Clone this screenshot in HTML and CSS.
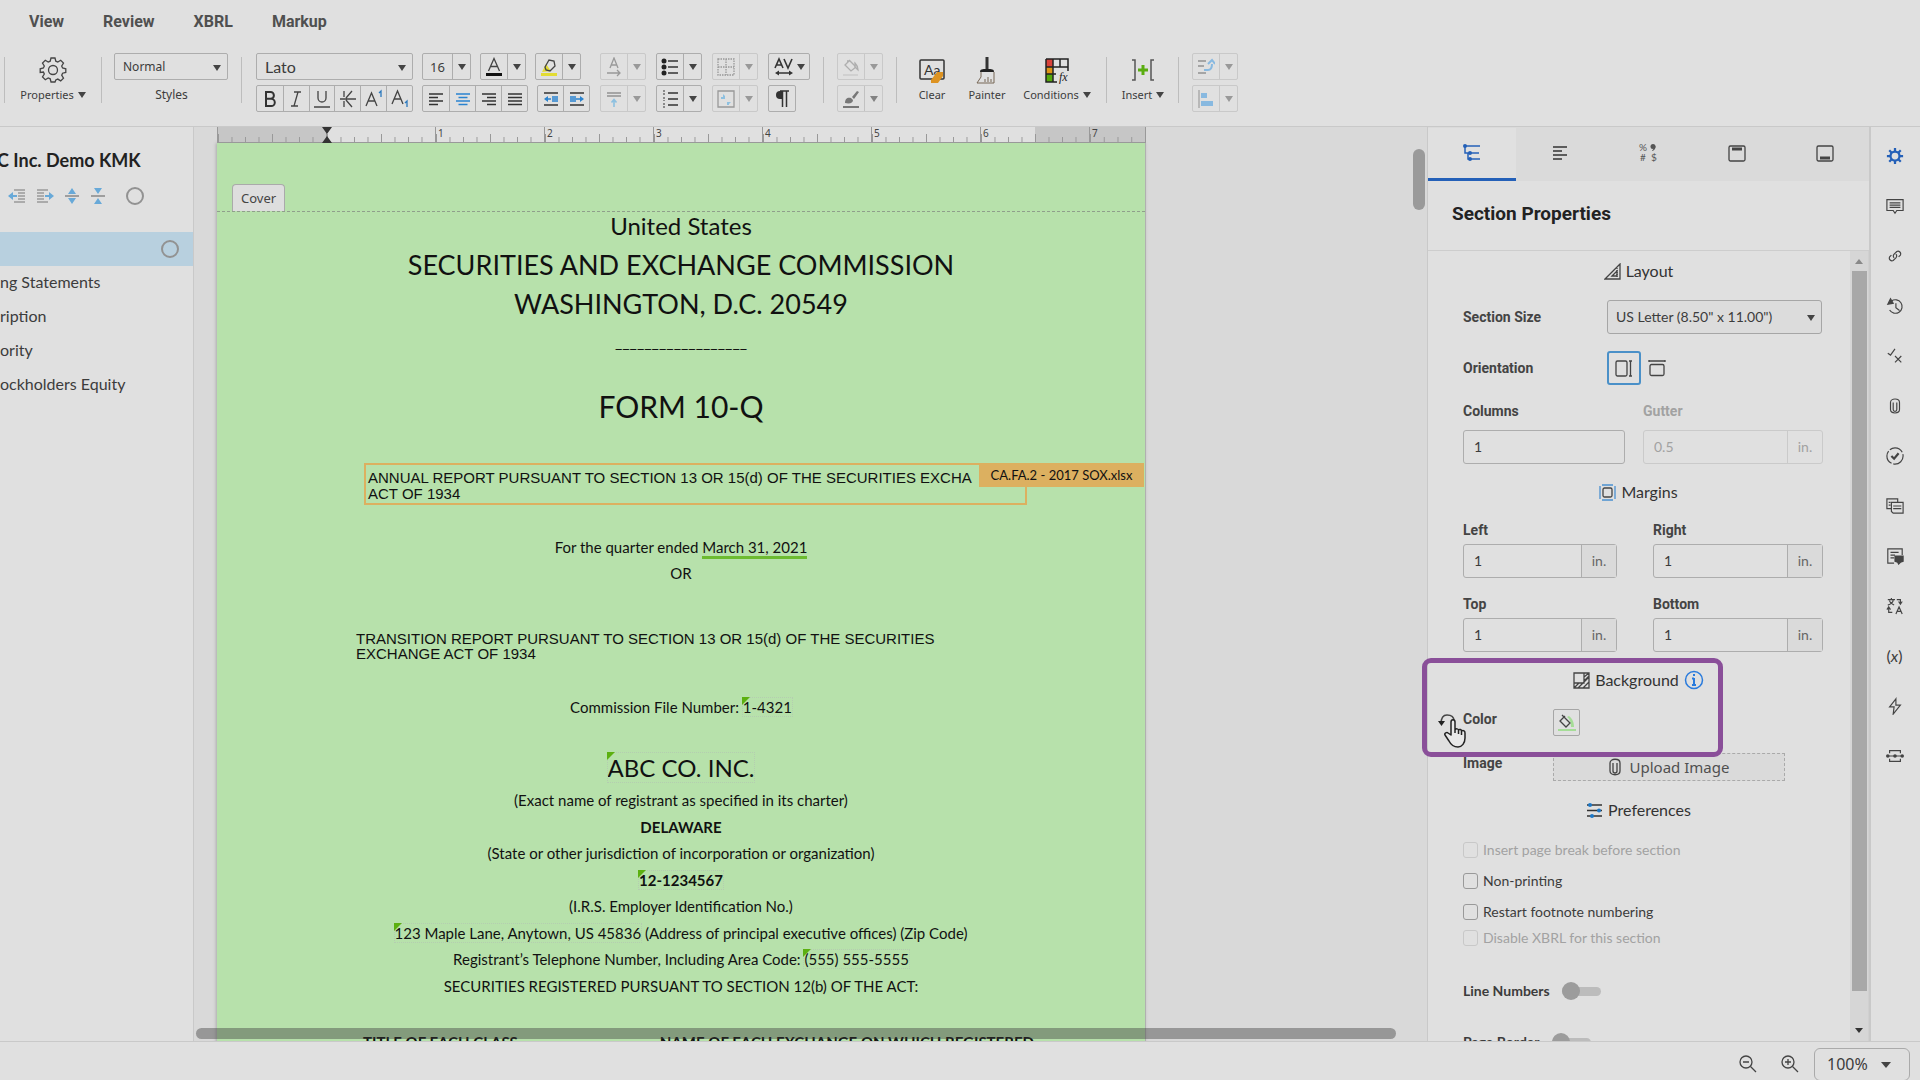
FILE: index.html
```html
<!DOCTYPE html>
<html lang="en">
<head>
<meta charset="utf-8">
<title>ABC Inc. Demo KMK</title>
<link rel="stylesheet" href="styles.css">
</head>
<body>
<header class="top">
  <nav class="menu">
    <a href="#view">View</a><a href="#review">Review</a><a href="#xbrl">XBRL</a><a href="#markup">Markup</a>
  </nav>
  <div class="toolbar">
    <div class="sep"></div>
    <button class="big props"><svg width="28" height="28" viewBox="0 0 28 28" class="ln"><path d="M12 2h4l.8 3.2 2 .9 2.9-1.8 2.8 2.8-1.8 2.9.9 2 3.2.8v3.6l-3.2.8-.9 2 1.800 2.900-2.800 2.800-2.900-1.800-2 .9L16 26h-4l-.8-3.200-2-.9-2.900 1.800-2.800-2.800 1.800-2.900-.9-2L1.200 16.400v-3.600l3.200-.8.9-2L3.500 7.100l2.800-2.800 2.900 1.800 2-.9z"/><circle cx="14" cy="14" r="4.500"/></svg><span class="cap">Properties <i class="caret"></i></span></button>
    <div class="sep"></div>
    <div class="styles">
      <span class="pick pick-style"><select id="style" aria-label="Style"><option>Normal</option></select></span>
      <label for="style">Styles</label>
    </div>
    <div class="sep"></div>
    <div class="rows fontrows">
      <div class="row">
        <span class="pick pick-font"><select aria-label="Font"><option>Lato</option></select></span>
        <span class="group"><input class="size" value="16" aria-label="Font size"><button class="dd" aria-label="Sizes"><i class="caret"></i></button></span>
        <span class="group"><button aria-label="Text color"><svg width="20" height="20" viewBox="0 0 20 20"><path d="M4.500 14L10 1.500 15.500 14M6.500 9.500h7" class="ln"/><rect x="2" y="16" width="16" height="3" fill="#111"/></svg></button><button class="dd" aria-label="Text colors"><i class="caret"></i></button></span>
        <span class="group"><button aria-label="Highlight"><svg width="20" height="20" viewBox="0 0 20 20"><path d="M3 15l4-8 5 7z" fill="#e3dc33"/><path d="M6 10l4-7 5 1 1 5-5 5-4-1z" class="ln"/><rect x="2" y="16" width="16" height="3" fill="#e3dc33"/></svg></button><button class="dd" aria-label="Highlight colors"><i class="caret"></i></button></span>
      </div>
      <div class="row">
        <span class="group fmt"><button><svg width="20" height="20" viewBox="0 0 20 20"><path d="M6 3h4.500a3.300 3.300 0 0 1 0 6.800H6zm0 6.800h5.200a3.600 3.600 0 0 1 0 7.200H6z" fill="none" stroke="#333" stroke-width="2"/></svg></button><button><svg width="20" height="20" viewBox="0 0 20 20" class="ln"><path d="M8 3h7M5 17h7M12 3L8 17"/></svg></button><button><svg width="20" height="20" viewBox="0 0 20 20" class="ln"><path d="M6 2v7a4 4 0 0 0 8 0V2M2 18h16"/></svg></button><button><svg width="20" height="20" viewBox="0 0 20 20" class="ln"><path d="M6 2v6M6 12v6M14 2L8 9M8 11l6 7M2 10h16"/></svg></button><button><svg width="20" height="20" viewBox="0 0 20 20" class="ln"><path d="M2 17L7.500 4 13 17M4 12h7"/><path d="M15 4l2-2v6" stroke="#2a78bd"/></svg></button><button><svg width="20" height="20" viewBox="0 0 20 20" class="ln"><path d="M2 15L7.500 2 13 15M4 10h7"/><path d="M15 14l2-2v6" stroke="#2a78bd"/></svg></button></span>
        <span class="group align"><button><svg width="16" height="16" viewBox="0 0 16 16" class="ln2"><path d="M1 3h14M1 6.500h9M1 10h14M1 13.500h9"/></svg></button><button><svg width="16" height="16" viewBox="0 0 16 16" class="ln2 blue"><path d="M1 3h14M3.500 6.500h9M1 10h14M3.500 13.500h9"/></svg></button><button><svg width="16" height="16" viewBox="0 0 16 16" class="ln2"><path d="M1 3h14M6 6.500h9M1 10h14M6 13.500h9"/></svg></button><button><svg width="16" height="16" viewBox="0 0 16 16" class="ln2"><path d="M1 3h14M1 6.500h14M1 10h14M1 13.500h14"/></svg></button></span>
        <span class="group indent"><button><svg width="16" height="16" viewBox="0 0 16 16" class="ln2"><path d="M1 2h14M1 14h14"/><path d="M9 6h6M9 8h6M9 10h6M8 8H4" stroke="#2a83cf"/><path d="M1 8l4-3v6z" fill="#2a83cf" stroke="none"/></svg></button><button><svg width="16" height="16" viewBox="0 0 16 16" class="ln2"><path d="M1 2h14M1 14h14"/><path d="M1 6h6M1 8h11M1 10h6" stroke="#2a83cf"/><path d="M15 8l-4-3v6z" fill="#2a83cf" stroke="none"/></svg></button></span>
      </div>
    </div>
    <div class="rows off"><div class="group"><button><svg width="18" height="20" viewBox="0 0 18 20" class="ln"><path d="M5 11l4-10 4 10M6.500 8h5M2 16h13M12 13l3 3-3 3"/></svg></button><button class="dd"><i class="caret"></i></button></div><div class="group"><button><svg width="18" height="18" viewBox="0 0 18 18" class="ln2"><path d="M2 3h14M2 6h14"/><path d="M9 10v7M6.500 12.500L9 9.500l2.500 3" stroke="#2a9be0"/></svg></button><button class="dd"><i class="caret"></i></button></div></div>
    <div class="rows"><div class="group"><button><svg width="18" height="18" viewBox="0 0 18 18" class="ln2"><path d="M7 3h10M7 9h10M7 15h10"/><g fill="#222" stroke="none"><circle cx="3" cy="3" r="2.500"/><circle cx="3" cy="9" r="2.500"/><circle cx="3" cy="15" r="2.500"/></g></svg></button><button class="dd"><i class="caret"></i></button></div><div class="group"><button><svg width="18" height="18" viewBox="0 0 18 18" class="ln2"><path d="M7 3h10M7 9h10M7 15h10"/><path d="M3 0v5M3 7v4M3 13v5" stroke-width="1" stroke-dasharray="2 1"/></svg></button><button class="dd"><i class="caret"></i></button></div></div>
    <div class="rows off"><div class="group"><button><svg width="18" height="18" viewBox="0 0 18 18" class="ln" stroke-dasharray="1.500 1"><path d="M1 1h16v16H1zM1 9h16M9 1v16"/></svg></button><button class="dd"><i class="caret"></i></button></div><div class="group"><button><svg width="18" height="18" viewBox="0 0 18 18" class="ln"><path d="M1 1h16v16H1z"/><path d="M4 9V7h2V4l2 2v3zM10 12h4l-2 2v1h-2z" fill="#2a9be0" stroke="none"/></svg></button><button class="dd"><i class="caret"></i></button></div></div>
    <div class="rows"><div class="group"><button class="av" aria-label="Character spacing"><svg width="20" height="20" viewBox="0 0 20 20" class="ln2"><path d="M1 11L5 2l4 9M2.500 8h5M10 2l4 9 4-9M3 16h14"/><path d="M1 16l4-2.500v5zM19 16l-4-2.500v5z" fill="#333" stroke="none"/></svg><i class="caret"></i></button></div><div class="group"><button aria-label="Marks"><svg width="16" height="20" viewBox="0 0 16 20"><path d="M9 2H6a4 4 0 0 0 0 8h3z" fill="#333"/><path d="M8.500 2v16M12.500 2v16M6 2h9" stroke="#333" stroke-width="1.500"/></svg></button></div></div>
    <div class="sep gapless"></div>
    <div class="rows"><div class="group off2"><button><svg width="20" height="20" viewBox="0 0 20 20" class="ln"><path d="M6 4h3l6 6-5 4-6-6 5-5"/><path d="M14 6c2 2 3 4 3 7l-3-3z" fill="#999"/><path d="M2 18h15" stroke-width="2" opacity=".3"/></svg></button><button class="dd"><i class="caret"></i></button></div><div class="group off3"><button><svg width="20" height="20" viewBox="0 0 20 20"><path d="M4 14c0-5 3-6 6-5l2 2c0 3-3 4-8 3zM11 8l5-6 2 1-5 7z" fill="#333"/><path d="M2 18h16" stroke="#333" stroke-width="2"/></svg></button><button class="dd"><i class="caret"></i></button></div></div>
    <div class="sep gapless"></div>
    <button class="big clear"><svg width="28" height="28" viewBox="0 0 28 28"><rect x="2" y="4" width="24" height="19" rx="1" fill="none" stroke="#333" stroke-width="1.500"/><text x="6" y="19" font-size="14" fill="#333">Aa</text><path d="M13 24l6-8h6v4l-5 7h-7z" fill="#dd9322"/></svg><span class="cap">Clear</span></button>
    <button class="big painter"><svg width="28" height="28" viewBox="0 0 28 28"><path d="M14 1v13" stroke="#333" stroke-width="3"/><path d="M7 16c0-3 2-3 7-3s7 0 7 3z" fill="#222"/><path d="M8 16v5l-4 6h17V16M12 26v-3M15 26v-5M18 26v-3" fill="none" stroke="#765" stroke-width="1"/></svg><span class="cap">Painter</span></button>
    <button class="big"><svg width="28" height="28" viewBox="0 0 28 28"><path d="M3 3h7v8H3z" fill="#d9413a"/><path d="M3 11h7v7H3z" fill="#df9515"/><path d="M3 18h7v8H3z" fill="#55a80c"/><path d="M3 3h22v12M3 3v23h7V3M3 11h22M3 18h10M17 3v8M10 26h4" fill="none" stroke="#222" stroke-width="1.500"/><text class="fxmark" x="16" y="25">fx</text></svg><span class="cap">Conditions <i class="caret"></i></span></button>
    <div class="sep gapless"></div>
    <button class="big insert"><svg width="28" height="28" viewBox="0 0 28 28"><path d="M3 4h3v20H3M25 4h-3v20h3" fill="none" stroke="#555" stroke-width="1.500"/><path d="M14 9v10M9 14h10" stroke="#5aad10" stroke-width="3"/></svg><span class="cap">Insert <i class="caret"></i></span></button>
    <div class="sep gapless"></div>
    <div class="rows off"><div class="group"><button><svg width="18" height="18" viewBox="0 0 18 18" class="ln2"><path d="M1 3h8M1 8h6M1 15h8"/><path d="M7 12h4c3 0 4-2 4-6M11 6l4-4 3 4" stroke="#1f8be0" stroke-width="2"/></svg></button><button class="dd"><i class="caret"></i></button></div><div class="group"><button><svg width="18" height="18" viewBox="0 0 18 18"><path d="M2 0v18" stroke="#333"/><path d="M4 3h6v5H4zM4 11h12v5H4z" fill="#1f8be0"/></svg></button><button class="dd"><i class="caret"></i></button></div></div>
  </div>
</header>

<main class="work">
  <aside class="outline">
    <h1>C Inc. Demo KMK</h1>
    <div class="tools">
      <button><svg width="18" height="16" viewBox="0 0 18 16"><path d="M6 2h11M10 5h7M10 8h7M10 11h7M6 14h11" stroke="#999" stroke-width="1.500"/><path d="M1 8h8" stroke="#68a9d8" stroke-width="2"/><path d="M0 8l5-4v8z" fill="#68a9d8"/></svg></button>
      <button><svg width="18" height="16" viewBox="0 0 18 16"><path d="M1 2h11M1 5h7M1 8h7M1 11h7M1 14h11" stroke="#999" stroke-width="1.500"/><path d="M9 8h6" stroke="#68a9d8" stroke-width="2"/><path d="M18 8l-5-4v8z" fill="#68a9d8"/></svg></button>
      <button><svg width="16" height="16" viewBox="0 0 16 16"><path d="M1 8h14" stroke="#888" stroke-width="1.500"/><path d="M8 0l4 6H4zM8 16l4-6H4z" fill="#68a9d8"/></svg></button>
      <button><svg width="16" height="16" viewBox="0 0 16 16"><path d="M1 8h14" stroke="#888" stroke-width="1.500"/><path d="M8 6l4-6H4zM8 10l4 6H4z" fill="#68a9d8"/></svg></button>
      <button><i class="ring"></i></button>
    </div>
    <ul class="tree">
      <li class="active"><i class="ring"></i></li>
      <li>ng Statements</li>
      <li>ription</li>
      <li>ority</li>
      <li>ockholders Equity</li>
    </ul>
  </aside>

  <section class="canvas">
    <div class="ruler">
      <div class="inch shade"></div><div class="inch">&nbsp;</div><div class="inch">1</div><div class="inch">2</div><div class="inch">3</div><div class="inch">4</div><div class="inch">5</div><div class="inch half">6</div><div class="inch last shade">7</div>
      <svg class="stop" width="12" height="16" viewBox="0 0 12 16"><path d="M1 0h10L6 7zM1 16h10L6 9z" fill="#333"/></svg>
    </div>
    <article class="page">
      <div class="pagetop"><span class="tab">Cover</span></div>
      <p class="t-us">United States</p>
      <p class="t-sec">SECURITIES AND EXCHANGE COMMISSION</p>
      <p class="t-sec">WASHINGTON, D.C. 20549</p>
      <p class="t-rule">__________________</p>
      <p class="t-form">FORM 10-Q</p>
      <div class="annual">ANNUAL REPORT PURSUANT TO SECTION 13 OR 15(d) OF THE SECURITIES EXCHA<br>ACT OF 1934<span class="tag">CA.FA.2 - 2017 SOX.xlsx</span></div>
      <p class="t-quarter">For the quarter ended <span class="link">March 31, 2021</span></p>
      <p>OR</p>
      <div class="transition">TRANSITION REPORT PURSUANT TO SECTION 13 OR 15(d) OF THE SECURITIES<br>EXCHANGE ACT OF 1934</div>
      <p>Commission File Number: <span class="fact">1-4321</span></p>
      <p class="t-name"><span class="fact">ABC CO. INC.</span></p>
      <div class="reg">
        <p>(Exact name of registrant as specified in its charter)</p>
        <p><b>DELAWARE</b></p>
        <p>(State or other jurisdiction of incorporation or organization)</p>
        <p><b class="fact">12-1234567</b></p>
        <p>(I.R.S. Employer Identification No.)</p>
        <p><span class="fact">123 Maple Lane, Anytown, US 45836</span> (Address of principal executive offices) (Zip Code)</p>
        <p>Registrant’s Telephone Number, Including Area Code: <span class="fact">(555) 555-5555</span></p>
        <p>SECURITIES REGISTERED PURSUANT TO SECTION 12(b) OF THE ACT:</p>
      </div>
      <div class="cols"><b>TITLE OF EACH CLASS</b><b>NAME OF EACH EXCHANGE ON WHICH REGISTERED</b></div>
    </article>
    <i class="hbar"></i><i class="vbar"></i>
  </section>

  <aside class="panel">
    <div class="tabs">
      <button class="on"><svg width="18" height="18" viewBox="0 0 18 18"><path d="M2 2h15M2 2v7h14M5 9v6h12" fill="none" stroke="#2460b8" stroke-width="1.500"/><g fill="#2460b8"><circle cx="2" cy="2" r="2"/><circle cx="7" cy="9" r="2"/><circle cx="7" cy="15" r="2"/></g></svg></button>
      <button><svg width="16" height="16" viewBox="0 0 16 16" class="ln2"><path d="M1 2h14M1 6h9M1 10h14M1 14h9"/></svg></button>
      <button><svg width="20" height="20" viewBox="0 0 20 20" fill="#555" font-size="10"><text x="1" y="8">%</text><text x="2" y="18">#</text><text x="13" y="18">$</text><circle cx="15" cy="3.500" r="2.500"/><path d="M17.500 3c0 3-1 4-3 5l-.5-.8c1.300-.8 1.800-1.700 1.800-3z"/></svg></button>
      <button><svg width="18" height="18" viewBox="0 0 18 18" class="ln"><rect x="1" y="2" width="16" height="15" rx="1.500"/><path d="M4 5h10" stroke-width="3"/></svg></button>
      <button><svg width="18" height="18" viewBox="0 0 18 18" class="ln"><rect x="1" y="2" width="16" height="15" rx="1.500"/><path d="M4 14h10" stroke-width="3"/></svg></button>
    </div>
    <h2>Section Properties</h2>
    <div class="scroller">
      <form class="props-form">
        <h3><svg width="17" height="17" viewBox="0 0 17 17" class="ln"><path d="M1 16L16 1v15zM8 13l5-5v5z"/><path d="M13 5v10" stroke-dasharray="1 1"/></svg>Layout</h3>
        <div class="line"><label for="sz">Section Size</label><span class="pick pick-sz"><select id="sz"><option>US Letter (8.50" x 11.00")</option></select></span></div>
        <div class="line"><span class="lbl">Orientation</span><span class="orient"><button type="button" class="sel" aria-label="Portrait"><svg width="18" height="18" viewBox="0 0 18 18" class="ln"><rect x="1" y="2" width="11" height="15" rx="1.500"/><path d="M15.500 2v15M14 2h3M14 17h3"/></svg></button><button type="button" aria-label="Landscape"><svg width="18" height="18" viewBox="0 0 18 18" class="ln"><rect x="2" y="5.500" width="14" height="11" rx="1.500"/><path d="M1 2h16M1 1v2M17 1v2"/></svg></button></span></div>
        <div class="pair cols-pair"><div><label for="co">Columns</label><span class="field"><input id="co" value="1"></span></div><div class="dim"><label for="gu">Gutter</label><span class="field"><input id="gu" value="0.5" disabled><span class="unit">in.</span></span></div></div>
        <h3><svg width="17" height="17" viewBox="0 0 17 17" class="ln"><rect x="4" y="4" width="9" height="9" rx="1.500"/><path d="M3 1h11M3 16h11M1 2v13M16 2v13" stroke="#4a90d0"/></svg>Margins</h3>
        <div class="pair"><div><label for="ml">Left</label><span class="field"><input id="ml" value="1"><span class="unit">in.</span></span></div><div><label for="mr">Right</label><span class="field"><input id="mr" value="1"><span class="unit">in.</span></span></div></div>
        <div class="pair"><div><label for="mt">Top</label><span class="field"><input id="mt" value="1"><span class="unit">in.</span></span></div><div><label for="mb">Bottom</label><span class="field"><input id="mb" value="1"><span class="unit">in.</span></span></div></div>
        <h3><svg width="17" height="17" viewBox="0 0 17 17" class="ln"><path d="M1 1h15v15H1zM1 11h10V1M1 16l5-5M5 16L16 5M10 16l6-6M11 5l5-4M11 9l5-5"/></svg>Background<svg width="20" height="20" viewBox="0 0 20 20"><circle cx="10" cy="10" r="8.500" fill="none" stroke="#2a7bdc" stroke-width="1.500"/><path d="M10 8v7M8 8.500h2M8 15h4M10 4v2" stroke="#2a7bdc" stroke-width="2"/></svg></h3>
        <div class="media"><span class="lbl">Color</span><button type="button" class="swatch" aria-label="Background color"><svg width="20" height="20" viewBox="0 0 20 20"><path d="M12 3c4 3 5 7 5 11h-3c0-4-1-8-4-10z" fill="#a5dd97"/><path d="M5 2l8 8-4 4-6-6 5-5" class="ln"/><path d="M1 17h18" stroke="#a5dd97" stroke-width="2"/></svg></button></div>
        <div class="media"><span class="lbl">Image</span><button type="button" class="upload"><svg width="12" height="18" viewBox="0 0 12 18" class="ln"><path d="M8 5v8a2 2 0 0 1-4 0V5M1 5c0-5 10-5 10 0v8c0 5-10 5-10 0z"/></svg>Upload Image</button></div>
        <h3><svg width="17" height="17" viewBox="0 0 17 17" class="ln2"><path d="M1 3h15M1 8.500h15M1 14h15"/><g fill="#1c78c8" stroke="none"><circle cx="4" cy="3" r="2"/><circle cx="13" cy="8.500" r="2"/><circle cx="6" cy="14" r="2"/></g></svg>Preferences</h3>
        <div class="checks">
          <label class="dim"><input type="checkbox" disabled>Insert page break before section</label>
          <label><input type="checkbox">Non-printing</label>
          <label><input type="checkbox">Restart footnote numbering</label>
          <label class="dim tight"><input type="checkbox" disabled>Disable XBRL for this section</label>
        </div>
        <div class="switches">
          <label>Line Numbers<input type="checkbox" class="switch"></label>
          <label>Page Border<input type="checkbox" class="switch"></label>
        </div>
      </form>
      <div class="vscroll"><i class="up"></i><i class="thumb"></i><i class="down"></i></div>
    </div>
    <svg class="undo" width="18" height="16" viewBox="0 0 18 16"><path d="M3 11C3 5 5 2 9 2s7 2 7 6" fill="none" stroke="#444" stroke-width="1.500"/><path d="M0 8h7l-3.500 5z" fill="#222"/></svg>
    <div class="callout"></div>
    <svg class="hand" width="22" height="30" viewBox="0 0 22 30"><path d="M7 17V4c0-3 4-3 4 0v8c1-2 3.500-1 3.500 0 1-1 3-.5 3 1 2-1 3.500 0 3.500 2v5c0 5-3 9-7 9-5 0-7-2-9-6l-4-6c-1-2 2-3 3-2zM11 10v5M14.500 12v4M17.500 13v4" fill="#e8e8e8" stroke="#222" stroke-width="1.500" stroke-linejoin="round"/></svg>
  </aside>

  <nav class="rail">
    <button><svg viewBox="0 0 20 20"><g stroke="#2460b8" fill="none"><circle cx="10" cy="10" r="5" stroke-width="2.500"/><path d="M10 1v4M10 15v4M1 10h4M15 10h4M3.600 3.600l3 3M13.400 13.400l3 3M3.600 16.400l3-3M13.400 6.600l3-3" stroke-width="2.500"/></g></svg></button>
    <button><svg viewBox="0 0 20 20" class="ln"><path d="M1 3h18v12h-7l-2 3-2-3H1zM4 6.500h12M4 9h12M4 11.500h12"/></svg></button>
    <button><svg viewBox="0 0 20 20" class="ln"><path d="M9 12a3 3 0 0 1 0-4l3-3a3 3 0 0 1 4 4l-2 2M11 8a3 3 0 0 1 0 4l-3 3a3 3 0 0 1-4-4l2-2"/></svg></button>
    <button><svg viewBox="0 0 20 20" class="ln"><path d="M6 4.500a7.500 7.500 0 1 1-2 10M11 7v5l4 3"/><path d="M2 8l3-6 3 5z" fill="#444"/></svg></button>
    <button><svg viewBox="0 0 20 20" class="ln"><path d="M2 7l3 2 5-7M10 10l7 7M17 10l-7 7"/></svg></button>
    <button><svg viewBox="0 0 20 20" class="ln"><path d="M12 6v8a2 2 0 0 1-4 0V6M5 6c0-5 10-5 10 0v8c0 5-10 5-10 0z"/></svg></button>
    <button><svg viewBox="0 0 20 20" class="ln"><circle cx="10" cy="10" r="9" stroke-dasharray="16 2"/><path d="M6 10l3 3 5-6" stroke-width="2.500"/></svg></button>
    <button><svg viewBox="0 0 20 20" class="ln"><path d="M6 13H1V2h12v4M6 6h13v12H8l-2-2zM3 6h2M3 9h2M8 10h9M8 13h9"/></svg></button>
    <button><svg viewBox="0 0 20 20" class="ln"><path d="M9 18H2V2h16v7M5 6h9M5 9h5M5 12h4"/><path d="M10 10h9v6l-3 1-2 2-1-2-3-1z" fill="#444"/></svg></button>
    <button><svg viewBox="0 0 20 20" class="ln"><path d="M2 3h8M6 1v2M8 3c0 3-3 5-6 6M4 4c0 2 3 4 5 5M12 3h4v4M14 5l2 3 2-3M3 12v5h4M1 14l2-3 2 3M11 19l3.500-8L18 19M12 16h5"/></svg></button>
    <button class="fx">(<i>x</i>)</button>
    <button><svg viewBox="0 0 20 20" class="ln"><path d="M11 2L4 11h5l-1 8 8-10h-5z"/></svg></button>
    <button><svg viewBox="0 0 20 20" class="ln"><path d="M4 7V4h12v3M4 13v3h12v-3M1 10h18"/><g fill="#444" stroke="none"><circle cx="2" cy="10" r="2"/><circle cx="10" cy="10" r="2"/><circle cx="18" cy="10" r="2"/></g></svg></button>
  </nav>
</main>

<footer class="status">
  <button aria-label="Zoom out"><svg width="18" height="18" viewBox="0 0 18 18" class="ln"><circle cx="7" cy="7" r="6"/><path d="M4 7h6M11.500 11.500L17 17"/></svg></button>
  <button aria-label="Zoom in"><svg width="18" height="18" viewBox="0 0 18 18" class="ln"><circle cx="7" cy="7" r="6"/><path d="M4 7h6M7 4v6M11.500 11.500L17 17"/></svg></button>
  <span class="pick pick-zoom"><select aria-label="Zoom"><option>100%</option></select></span>
</footer>
</body>
</html>
```

FILE: styles.css
```css
* { box-sizing: border-box; }
body {
  margin: 0; height: 100vh; overflow: hidden;
  display: flex; flex-direction: column;
  background: #e0e0e0; color: #3c3c3c;
  font: 14px/20px Lato, sans-serif;
}
button, input, select { font: inherit; color: inherit; background: none; border: 0; padding: 0; margin: 0; border-radius: 0; outline: 0; }
button { display: flex; align-items: center; justify-content: center; }
svg { flex: none; display: block; }
.ln { fill: none; stroke: #444; stroke-width: 1.3px; }
.ln2 { fill: none; stroke: #333; stroke-width: 1.6px; }
.blue { stroke: #2a83cf; }
.caret { display: inline-block; border: 4px solid transparent; border-top: 6px solid #444; border-bottom: 0; }

/* header */
.top { border-bottom: 1px solid #c9c9c9; height: 127px; flex: none; }
.menu { display: flex; gap: 39px; padding: 12px 29px 0; height: 53px; font: bold 16px/20px Roboto, sans-serif; }
.menu a { color: #505050; text-decoration: none; }
.toolbar { display: flex; padding-left: 4px; height: 60px; }
.sep { width: 1px; height: 46px; margin-top: 4px; background: #bdbdbd; flex: none; }
.big { flex-direction: column; justify-content: flex-start; gap: 1px; padding-top: 3px; flex: none; }
.cap, .styles label { font: 12px/20px "Noto Sans", sans-serif; white-space: nowrap; }
.big .cap { display: flex; align-items: center; gap: 4px; font-size: 11px; }
.fxmark { font: italic 12px "Liberation Serif", serif; fill: #222; }
.props { width: 96px; }
.pick { position: relative; display: block; border: 1px solid #adadad; border-radius: 2px; height: 27px; }
.pick select { appearance: none; width: 100%; height: 100%; padding-left: 8px; }
.pick::after { content: ""; position: absolute; right: 6px; top: 50%; margin-top: -2px; border: 4px solid transparent; border-top: 6px solid #444; border-bottom: 0; pointer-events: none; }
.styles { width: 139px; padding: 0 12px 0 12px; text-align: center; }
.styles label { display: block; margin-top: 5px; }
.pick-style { width: 114px; font-family: "Noto Sans", sans-serif; font-size: 12px; }
.pick-font { width: 157px; font: 16px/20px Lato, sans-serif; }
.rows { display: flex; flex-direction: column; gap: 5px; margin-left: 10px; align-items: flex-start; flex: none; }
.fontrows { margin-left: 14px; }
.row { display: flex; gap: 9px; }
.group { display: flex; height: 27px; border: 1px solid #adadad; border-radius: 2px; }
.group button, .group .size { width: 26px; }
.group .size { width: 29px; text-align: center; font: 13px/20px "Noto Sans", sans-serif; }
.group > * + * { border-left: 1px solid #adadad; }
.group .dd { width: 18px; }
.group .av { width: 40px; gap: 3px; }
.fmt { width: 157px; }
.align { width: 106px; }
.indent { width: 53px; }
.off .group, .off2, .off3 { border-color: #c9c9c9; }
.off button, .off2 button { opacity: .45; }
.off2 button svg { opacity: .7; }
.off3 button { opacity: .6; }
.gapless { margin-left: 13px; }
.gapless + .rows { margin-left: 13px; }
.clear { width: 50px; margin-left: 10px; }
.painter { width: 60px; }
.painter + .big { width: 72px; margin-left: 4px; }
.insert { width: 44px; margin-left: 14px; }

/* workspace */
.work { flex: 1; min-height: 0; display: flex; background: #d9d9d9; }
.outline { width: 194px; flex: none; background: #e0e0e0; border-right: 1px solid #c9c9c9; overflow: hidden; }
.outline h1 { margin: 21px 0 0 -3px; font: bold 18px/24px Lato, sans-serif; color: #222; white-space: nowrap; }
.tools { display: flex; gap: 10px; padding: 14px 0 0 8px; height: 60px; align-items: flex-start; }
.tools button { height: 20px; }
.tools button:last-child { margin-left: 10px; }
.ring { width: 18px; height: 18px; border: 2px solid #929292; border-radius: 50%; display: block; }
.tree { list-style: none; margin: 0; padding: 0; font-size: 16px; line-height: 32px; }
.tree li { height: 34px; white-space: nowrap; }
.tree .active { background: #b8d0df; display: flex; align-items: center; justify-content: flex-end; padding-right: 14px; }

.canvas { flex: 1; min-width: 0; position: relative; overflow: hidden; padding-left: 23px; }
.ruler { position: relative; display: flex; width: 929px; height: 16px; border-bottom: 1px solid #999; border-left: 1px solid #999; border-right: 1px solid #999; background: #e0e0e0; }
.inch {
  flex: 2; font: 10px/12px "Noto Sans", sans-serif; padding-left: 2px; border-left: 1px solid #999; color: #444;
  background-image: linear-gradient(90deg, #999 1px, transparent 1px), linear-gradient(90deg, #999 1px, transparent 1px);
  background-size: 50% 8px, 12.5% 5px; background-position: left bottom; background-repeat: repeat-x;
}
.inch:first-child { border-left: 0; }
.shade { background-color: #c6c6c6; }
.last { flex: 1; background-size: 100% 8px, 25% 5px; }
.half { background-image: linear-gradient(90deg, #999 1px, transparent 1px), linear-gradient(90deg, #999 1px, transparent 1px), linear-gradient(90deg, transparent 50%, #c6c6c6 50%); background-size: 50% 8px, 12.5% 5px, 100% 100%; }
.stop { position: absolute; left: 103px; top: 0; }
.page { width: 929px; background: #b7e1ab; border-right: 1px solid #b0b0b0; height: 100%; overflow: hidden; color: #111; font: 15px/26px Lato, sans-serif; text-align: center; box-shadow: -1px 0 3px #aaa; }
.page p { margin: 0; white-space: nowrap; }
.pagetop { height: 69px; border-bottom: 1px dashed #8f9f8b; display: flex; align-items: flex-end; padding-left: 15px; }
.tab { background: #dedede; border: 1px solid #aaa; border-bottom: 0; border-radius: 4px 4px 0 0; padding: 0 8px; font: 13px/26px "Noto Sans", sans-serif; color: #444; }
.page .t-us { font-size: 24px; line-height: 28px; margin-bottom: 5px; }
.page .t-sec { font-size: 27px; line-height: 39px; }
.page .t-rule { margin-top: 6px; font-size: 16px; }
.page .t-form { font-size: 30px; line-height: 40px; margin: 31px 0 37px; }
.annual { position: relative; width: 663px; margin-left: 147px; border: 2px solid #dcb060; padding: 5px 2px 1px; font: 15px/16px "Liberation Sans", sans-serif; text-align: left; white-space: nowrap; }
.tag { position: absolute; left: 613px; top: -2px; width: 165px; background: #dcb060; font: 13px/24px Lato, sans-serif; text-align: center; }
.page .t-quarter { margin-top: 29px; }
.link { border-bottom: 3px solid #6cbb30; }
.transition { margin: 45px 0 33px 139px; font: 15px/15px "Liberation Sans", sans-serif; text-align: left; }
.fact { position: relative; outline: 1px dotted #b4cdb0; }
.fact::before { content: ""; position: absolute; left: -1px; top: -1px; border-top: 8px solid #5cb010; border-right: 8px solid transparent; }
.page .t-name { font-size: 24px; line-height: 34px; margin: 31px 0 2px; }
.reg p:nth-child(even) { margin-top: 1px; }
.cols { display: flex; gap: 142px; padding-left: 146px; margin-top: 30px; text-align: left; white-space: nowrap; font-size: 15px; }
.hbar { position: absolute; left: 2px; right: 31px; bottom: 2px; height: 11px; border-radius: 6px; background: rgba(60,60,60,.42); }
.vbar { position: absolute; right: 2px; top: 22px; width: 12px; height: 61px; border-radius: 6px; background: #9a9a9a; }

/* properties panel */
.panel { position: relative; width: 442px; flex: none; background: #e0e0e0; border-left: 1px solid #c9c9c9; display: flex; flex-direction: column; }
.tabs { display: grid; grid-template-columns: repeat(5, 1fr); height: 54px; background: #dadada; flex: none; padding-top: 1px; }
.tabs button { border-bottom: 3px solid transparent; }
.tabs .on { background: #e0e0e0; border-color: #2460b8; }
.panel h2 { margin: 0; padding: 23px 24px 0; height: 70px; border-bottom: 1px solid #cdcdcd; font: bold 19px/20px Roboto, sans-serif; color: #222; flex: none; }
.scroller { flex: 1; min-height: 0; display: flex; overflow: hidden; }
.props-form { flex: 1; padding: 8px 28px 0 35px; }
.props-form h3 { margin: 0 8px 0 0; display: flex; align-items: center; justify-content: center; gap: 5px; font: 16px/24px Lato, sans-serif; color: #333; }
.line { display: flex; align-items: center; margin-top: 17px; }
.line label, .line .lbl { width: 144px; }
.line label, .lbl, .pair label { font: bold 14px/20px Roboto, sans-serif; color: #444; }
.pick-sz { flex: 1; height: 34px; background: #dcdcdc; border-color: #a6a6a6; border-radius: 3px; }
.orient { display: flex; gap: 7px; }
.orient button { height: 34px; }
.orient .sel { width: 34px; border: 2px solid #4a90c8; border-radius: 3px; }
.pair { display: grid; grid-template-columns: 154px 170px; justify-content: space-between; margin-top: 16px; margin-right: -1px; }
.cols-pair { grid-template-columns: 162px 180px; }
.pair.cols-pair label { margin-bottom: 9px; }
.pair label { display: block; }
.field { display: flex; height: 34px; margin-top: 4px; border: 1px solid #adadad; border-radius: 3px; }
.field input { flex: 1; min-width: 0; padding-left: 10px; }
.unit { width: 35px; border-left: 1px solid #adadad; background: #dadada; line-height: 32px; text-align: center; color: #666; }
.dim .field, .dim .unit { border-color: #cacaca; background: none; }
.props-form .dim, .props-form .dim label, .dim .unit, .dim input { color: #a2a2a2; }
.props-form .pair + h3 { margin-top: 16px; }
.props-form .media + h3 { margin-top: 17px; }
.media { display: flex; margin-top: 17px; }
.media .lbl { width: 90px; }
.swatch { width: 27px; height: 27px; border: 1px solid #a6a6a6; border-radius: 2px; }
.upload { width: 232px; height: 28px; border: 1px dashed #aaa; background: #dadada; gap: 9px; font: 15px/20px "Noto Sans", sans-serif; color: #505050; }
.checks { display: grid; gap: 11px; margin-top: 18px; }
.checks label { display: flex; align-items: center; gap: 5px; }
.checks .tight { margin-top: -5px; }
.checks input { appearance: none; width: 15px; height: 16px; border: 1px solid #999; border-radius: 3px; }
.checks .dim input { border-color: #c8c8c8; }
.switches { margin-top: 33px; display: grid; gap: 31px; font-weight: bold; }
.switches label { display: flex; align-items: center; gap: 12px; }
.switch { appearance: none; position: relative; width: 39px; height: 9px; border-radius: 5px; background: #bcbcbc; }
.switch::before { content: ""; position: absolute; left: 0; top: -5px; width: 18px; height: 18px; border-radius: 50%; background: #9c9c9c; }
.vscroll { width: 19px; display: flex; flex-direction: column; align-items: center; background: #d6d6d6; padding: 8px 0; border-right: 1px solid #d0d0d0; }
.vscroll .up { border: 4px solid transparent; border-bottom: 5px solid #888; border-top: 0; margin-bottom: 7px; }
.vscroll .thumb { width: 15px; flex: 1; background: #a8a8a8; }
.vscroll .down { border: 4px solid transparent; border-top: 5px solid #333; border-bottom: 0; margin-top: 37px; }
.undo { position: absolute; left: 10px; top: 586px; }
.callout { position: absolute; left: -6px; top: 531px; width: 301px; height: 99px; border: 5px solid #8a4f99; border-radius: 9px; }
.hand { position: absolute; left: 16px; top: 591px; }

.rail { width: 51px; flex: none; background: #e0e0e0; border-left: 2px solid #c9c9c9; display: flex; flex-direction: column; align-items: center; gap: 30px; padding: 19px 2px 0 0; }
.rail svg { width: 18px; height: 18px; }
.rail button { height: 20px; }
.fx { font-size: 16px; }

.status { height: 39px; flex: none; border-top: 1px solid #c9c9c9; display: flex; justify-content: flex-end; align-items: center; gap: 24px; padding-right: 10px; padding-top: 6px; }
.pick-zoom { width: 96px; height: 33px; border-color: #aaa; border-radius: 6px; margin-left: -9px; font: 16px/20px "Noto Sans", sans-serif; }
.pick-zoom select { padding-left: 12px; }
.pick-zoom::after { right: 18px; border-width: 6px 5px 0; }
```
